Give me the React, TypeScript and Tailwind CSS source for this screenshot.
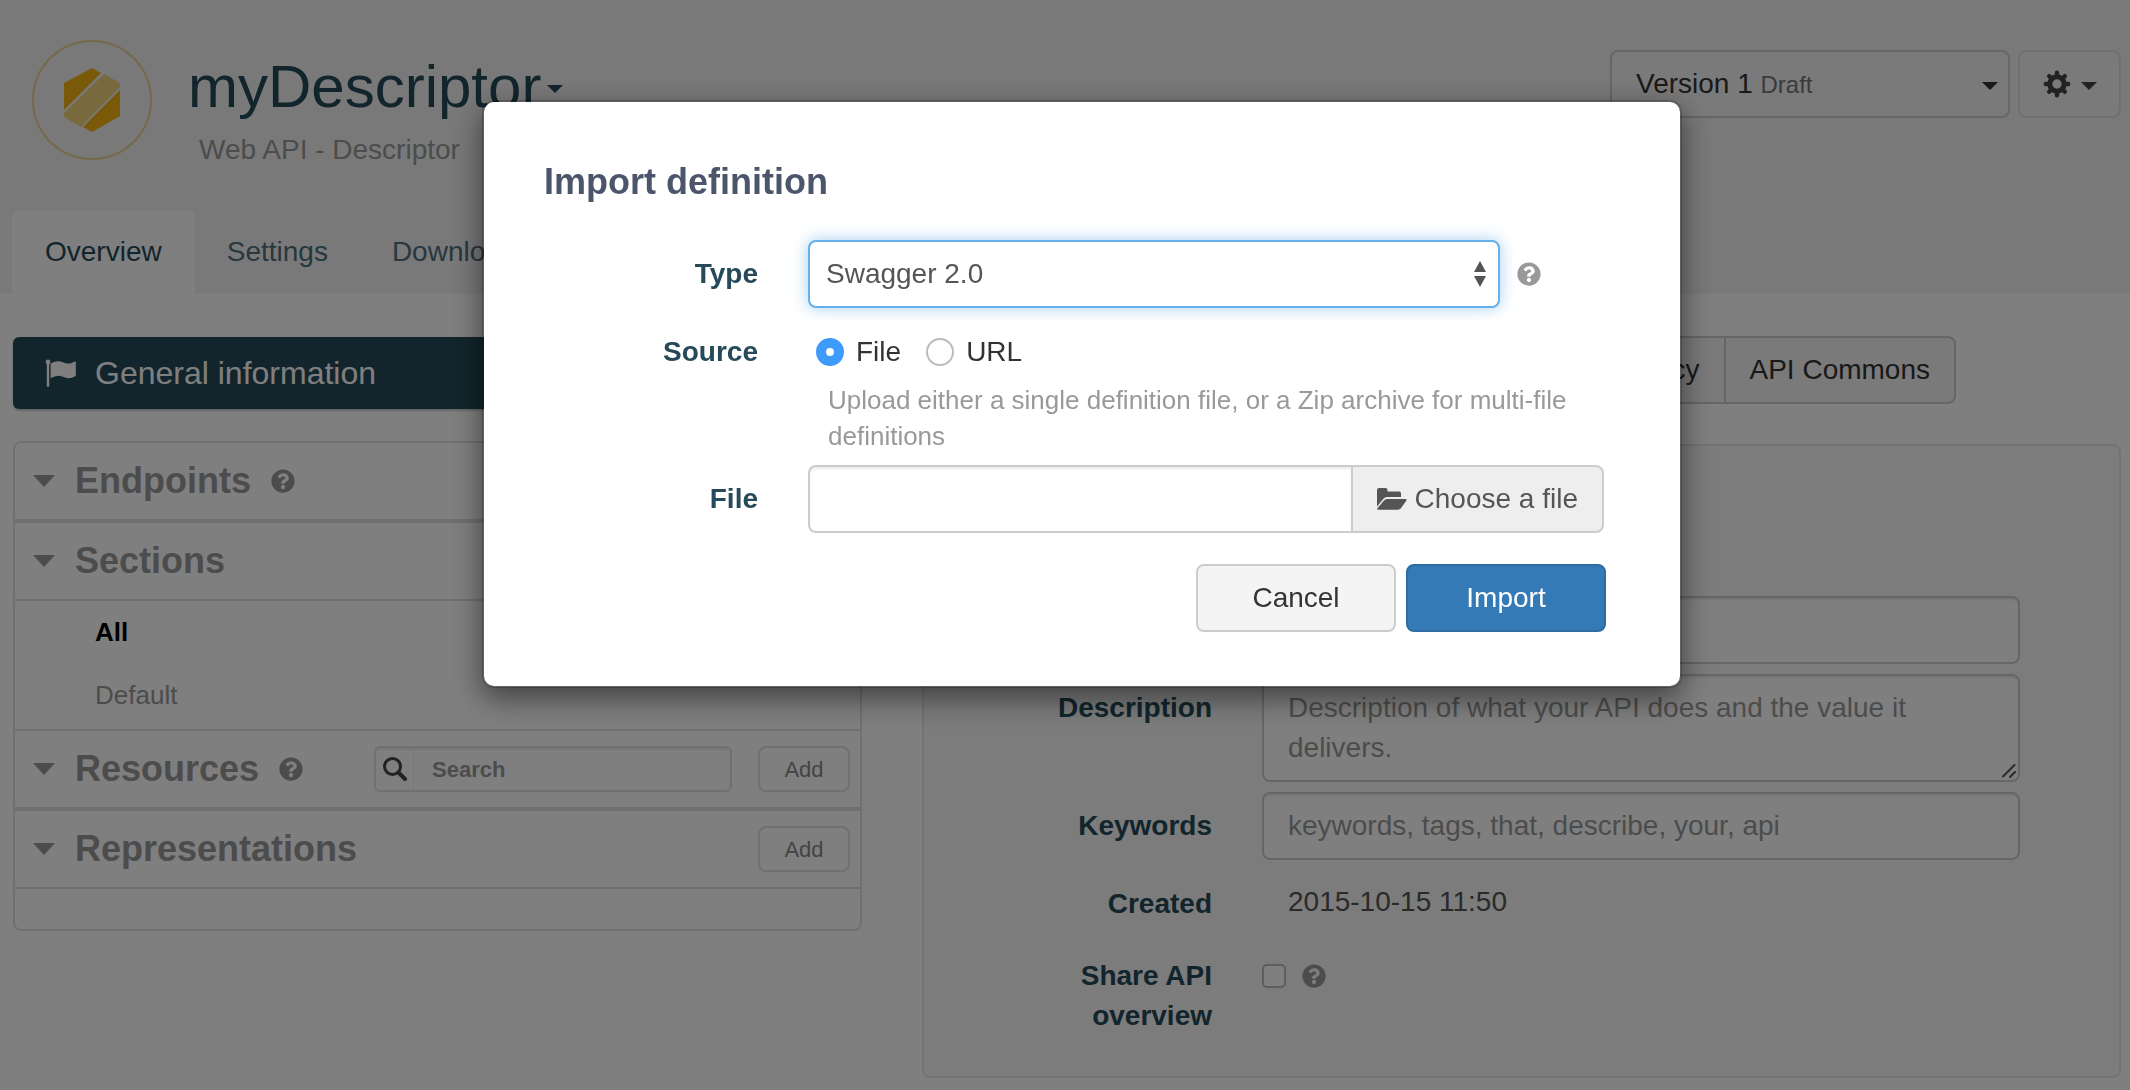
import React from 'react';
import { FaQuestionCircle } from 'react-icons/fa';

const control =
  'block w-full rounded-lg border-2 border-[#cccccc] bg-white px-6 py-3 text-[28px] leading-10 text-[#555555] placeholder-[#999999] shadow-[inset_0_2px_2px_rgba(0,0,0,0.075)]';
const fieldLabel = 'pt-[14px] text-right text-[28px] leading-10 font-bold text-[#264a59]';

function Caret({ className = '' }: { className?: string }) {
  return (
    <svg viewBox="0 0 16 8" className={`h-2 w-4 shrink-0 ${className}`} fill="currentColor" aria-hidden="true">
      <path d="M0 0h16L8 8z" />
    </svg>
  );
}

function Help({ label }: { label: string }) {
  return (
    <button type="button" aria-label={label} className="shrink-0 text-[#999999]">
      <FaQuestionCircle className="size-6" />
    </button>
  );
}

function Logo() {
  return (
    <svg viewBox="0 0 120 120" className="size-[120px] shrink-0" aria-hidden="true">
      <circle cx="60" cy="60" r="59" fill="none" stroke="#ecd394" strokeWidth="2" />
      <path d="M60 28 69 33 32 70V43z" fill="#f4b412" />
      <path d="M72 34 88 43V47L49 87 32 77V73z" fill="#f2d47c" />
      <path d="M88 50V76L60 92 51 87z" fill="#f4b412" />
    </svg>
  );
}

function Gear() {
  return (
    <svg viewBox="0 0 28 28" className="size-7" fill="none" stroke="currentColor" aria-hidden="true">
      <circle cx="14" cy="14" r="7.2" strokeWidth="5" />
      <g strokeWidth="4.4" strokeLinecap="round">
        <path d="M14 2.800V6M14 22v3.200M2.800 14H6M22 14h3.200" />
        <path d="M6.200 6.200 8.400 8.400M19.600 19.600l2.200 2.200M21.800 6.200 19.600 8.400M8.400 19.600l-2.200 2.200" />
      </g>
    </svg>
  );
}

function Flag() {
  return (
    <svg viewBox="0 0 32 28" className="h-7 w-8" fill="currentColor" aria-hidden="true">
      <circle cx="3" cy="3" r="2.400" />
      <path d="M1.800 4h2.400v23a.8.8 0 0 1-.8.8h-.8a.8.8 0 0 1-.8-.8z" />
      <path d="M5.600 4.600C9 2.800 11.500 2 14 2.200c3.600.3 5.400 2.400 9 2.400 2.600 0 4.800-1 7-2.100.4-.2.8 0 .8.500v13.200c0 .5-.3.800-.7 1-2 1.100-4.200 2-6.800 2-3.600 0-5.600-2.500-9.300-2.500-3 0-5.600 1.100-8.400 2.600z" />
    </svg>
  );
}

function FolderOpen() {
  return (
    <svg viewBox="0 0 30 22" className="h-[22px] w-[30px]" fill="currentColor" aria-hidden="true">
      <path d="M2 0h6.500a2 2 0 0 1 2 2v1.500H22a2 2 0 0 1 2 2V9H10a4.500 4.500 0 0 0-3.300 1.500L0 18.500V2a2 2 0 0 1 2-2z" />
      <path d="M10 11h18.500c1 0 1.500.8.900 1.600L24 20.200a4 4 0 0 1-3 1.500H1.500c-1 0-1.500-.8-.9-1.600L7 12.500a4 4 0 0 1 3-1.500z" />
    </svg>
  );
}

function Header() {
  return (
    <header className="bg-[#f3f3f3] pt-10">
      <div className="flex h-[170px] items-start justify-between pr-[9px] pl-8">
        <div className="flex gap-9">
          <Logo />
          <div className="pt-[17px]">
            <h1 className="text-[60px] leading-[60px] text-[#264a59]">
              <button type="button" className="flex items-center gap-1.5">
                myDescriptor
                <Caret className="mt-1" />
              </button>
            </h1>
            <p className="mt-[13px] pl-[11px] text-[28px] leading-10 text-[#999999]">Web API - Descriptor</p>
          </div>
        </div>
        <div className="flex gap-2 pt-2.5 text-[#333333]">
          <button
            type="button"
            className="flex h-[68px] w-[400px] items-center justify-between rounded-lg border-2 border-[#cccccc] bg-[#f4f4f4] pr-2.5 pl-6 text-[28px]"
          >
            <span>
              Version 1 <span className="text-2xl text-[#777777]">Draft</span>
            </span>
            <Caret className="mt-1" />
          </button>
          <button
            type="button"
            aria-label="Version settings"
            className="flex h-[68px] w-[103px] items-center justify-center gap-2.5 rounded-lg border-2 border-[#e0e0e0] bg-[#f4f4f4] text-[#444444]"
          >
            <Gear />
            <Caret className="mt-1" />
          </button>
        </div>
      </div>
      <nav className="flex pl-3 text-[28px] leading-10 text-[#4f707c]">
        <a href="#overview" className="rounded-t-lg bg-white px-[33px] py-[22px] text-[#264a59]">
          Overview
        </a>
        <a href="#settings" className="px-8 py-[22px]">
          Settings
        </a>
        <a href="#downloads" className="px-8 py-[22px]">
          Downloads
        </a>
      </nav>
    </header>
  );
}

function TreeHeader({ title, help, children }: { title: string; help?: boolean; children?: React.ReactNode }) {
  return (
    <div className="flex h-[76px] items-center pr-2.5 pl-[18px]">
      <svg viewBox="0 0 22 12" className="mr-5 h-3 w-[22px]" fill="#999999" aria-hidden="true">
        <path d="M0 0h22L11 12z" />
      </svg>
      <h2 className="mr-5 text-4xl font-bold text-[#999999]">{title}</h2>
      {help && <Help label={`About ${title}`} />}
      <div className="ml-auto flex items-center gap-[26px]">{children}</div>
    </div>
  );
}

function AddButton({ what }: { what: string }) {
  return (
    <button
      type="button"
      aria-label={`Add ${what}`}
      className="h-[46px] w-[92px] rounded-lg border-2 border-[#e0e0e0] bg-white text-[22px] text-[#888888]"
    >
      Add
    </button>
  );
}

function Sidebar() {
  return (
    <aside className="pt-[43px] pb-8">
      <button
        type="button"
        className="mb-8 flex h-[72px] w-full items-center gap-[18px] rounded-md bg-[#264a59] pl-8 text-[32px] text-white shadow-[0_2px_2px_rgba(0,0,0,0.2)]"
      >
        <Flag />
        General information
      </button>
      <div className="rounded-lg border-2 border-[#e0e0e0]">
        <div className="border-b-4 border-[#e0e0e0]">
          <TreeHeader title="Endpoints" help />
        </div>
        <div className="border-b-2 border-[#e0e0e0]">
          <TreeHeader title="Sections" />
        </div>
        <ul className="border-b-2 border-[#e0e0e0] pb-0.5 text-[26px] leading-[63px]">
          <li>
            <a href="#all" className="block pl-20 font-bold text-black">
              All
            </a>
          </li>
          <li>
            <a href="#default" className="block pl-20 text-[#999999]">
              Default
            </a>
          </li>
        </ul>
        <div className="border-b-4 border-[#e0e0e0]">
          <TreeHeader title="Resources" help>
            <label className="flex h-[46px] w-[358px] items-center rounded-md border-2 border-[#e0e0e0] shadow-[inset_0_2px_2px_rgba(0,0,0,0.075)]">
              <span className="flex h-full w-[38px] items-center justify-center border-r border-[#f0f0f0] text-[#444444]">
                <svg viewBox="0 0 24 24" className="size-6" fill="none" stroke="currentColor" aria-hidden="true">
                  <circle cx="9.500" cy="9.500" r="8" strokeWidth="3" />
                  <path d="m16 16 6 6" strokeWidth="4" strokeLinecap="round" />
                </svg>
              </span>
              <input
                type="search"
                aria-label="Search resources"
                placeholder="Search"
                className="min-w-0 flex-1 px-[18px] text-[22px] font-bold placeholder-[#999999]"
              />
            </label>
            <AddButton what="resource" />
          </TreeHeader>
        </div>
        <div className="border-b-2 border-[#e0e0e0]">
          <TreeHeader title="Representations">
            <AddButton what="representation" />
          </TreeHeader>
        </div>
        <div className="h-10" />
      </div>
    </aside>
  );
}

function Details() {
  return (
    <main className="pt-[42px]">
      <div className="mb-10 flex justify-end pr-[165px] text-[28px] text-[#333333]">
        <button type="button" className="h-[68px] rounded-l-lg border-2 border-[#cccccc] bg-[#f4f4f4] px-6">
          Privacy
        </button>
        <button type="button" className="-ml-0.5 h-[68px] rounded-r-lg border-2 border-[#cccccc] bg-[#f4f4f4] px-6">
          API Commons
        </button>
      </div>
      <form className="grid grid-cols-[188fr_758fr] gap-x-[50px] gap-y-2.5 rounded-lg border-2 border-[#e6e6e6] bg-[#f8f8f8] pt-[150px] pr-[99px] pb-10 pl-[100px]">
        <label htmlFor="name" className={fieldLabel}>
          Name
        </label>
        <input id="name" type="text" className={control} />
        <label htmlFor="description" className={fieldLabel}>
          Description
        </label>
        <div className="relative">
          <textarea
            id="description"
            rows={2}
            placeholder="Description of what your API does and the value it delivers."
            className={`${control} h-[108px] resize-none overflow-hidden pr-20`}
          />
          <svg
            viewBox="0 0 14 14"
            className="pointer-events-none absolute right-1 bottom-1 size-3.5"
            stroke="#555555"
            strokeWidth="2"
            strokeLinecap="round"
            aria-hidden="true"
          >
            <path d="M1 12.500 12.500 1M8 13l5-5" />
          </svg>
        </div>
        <label htmlFor="keywords" className={fieldLabel}>
          Keywords
        </label>
        <input id="keywords" type="text" placeholder="keywords, tags, that, describe, your, api" className={control} />
        <div className={fieldLabel}>Created</div>
        <p className="min-h-[62px] pt-3 pl-[26px] text-[28px] leading-10 text-[#555555]">2015-10-15 11:50</p>
        <label htmlFor="share" className={fieldLabel}>
          Share API overview
        </label>
        <div className="flex h-[68px] items-center gap-4">
          <input
            id="share"
            type="checkbox"
            className="size-6 appearance-none rounded-[5px] border-2 border-[#bcbcbc] bg-white"
          />
          <Help label="About sharing" />
        </div>
      </form>
    </main>
  );
}

function Radio({ id, label, checked }: { id: string; label: string; checked?: boolean }) {
  return (
    <span className="flex items-center gap-3">
      <input
        id={id}
        type="radio"
        name="source"
        defaultChecked={checked}
        className="size-7 appearance-none rounded-full border-2 border-[#bcbcbc] bg-white checked:border-[10px] checked:border-[#3f9bfb]"
      />
      <label htmlFor={id} className="text-[28px] leading-10 text-[#333333]">
        {label}
      </label>
    </span>
  );
}

function ImportDialog() {
  return (
    <div className="fixed inset-0 flex items-start justify-center bg-black/50 pt-[100px] pl-[34px]">
      <section
        role="dialog"
        aria-modal="true"
        aria-labelledby="import-title"
        className="w-full max-w-[1200px] rounded-xl border-2 border-black/20 bg-white bg-clip-padding px-[60px] pt-[58px] pb-[54px] shadow-[0_10px_30px_rgba(0,0,0,0.5)]"
      >
        <h2 id="import-title" className="text-4xl leading-[44px] font-bold text-[#4c566b]">
          Import definition
        </h2>
        <form className="mt-9 pr-3.5">
          <div className="grid grid-cols-[214px_1fr] gap-x-[50px] pr-0.5">
            <label htmlFor="type" className={fieldLabel}>
              Type
            </label>
            <div className="flex items-center gap-[17px] pr-[63px]">
              <div className="relative flex-1">
                <select
                  id="type"
                  className="h-[68px] w-full appearance-none rounded-lg border-2 border-[#66afe9] bg-white px-4 text-[28px] text-[#555555] shadow-[0_0_16px_rgba(102,175,233,0.6)]"
                >
                  <option>Swagger 2.0</option>
                </select>
                <svg
                  viewBox="0 0 14 26"
                  className="pointer-events-none absolute top-[21px] right-[13px] h-[26px] w-3.5"
                  fill="#555555"
                  aria-hidden="true"
                >
                  <path d="M7 0l6 11H1zM7 26 1 15h12z" />
                </svg>
              </div>
              <Help label="About import types" />
            </div>
            <div className="pt-6 text-right text-[28px] leading-10 font-bold text-[#264a59]" id="source-label">
              Source
            </div>
            <div role="radiogroup" aria-labelledby="source-label" className="flex gap-[25px] pt-6 pl-2">
              <Radio id="source-file" label="File" checked />
              <Radio id="source-url" label="URL" />
            </div>
            <p className="col-start-2 pt-2.5 pb-[11px] pl-5 text-[26px] leading-9 text-[#999999]">
              Upload either a single definition file, or a Zip archive for multi-file definitions
            </p>
            <label htmlFor="file" className={fieldLabel}>
              File
            </label>
            <div className="flex">
              <input
                id="file"
                type="text"
                className="h-[68px] min-w-0 flex-1 rounded-l-lg border-2 border-r-0 border-[#cccccc] px-6 text-[28px] shadow-[inset_0_2px_2px_rgba(0,0,0,0.075)]"
              />
              <button
                type="button"
                className="flex h-[68px] items-center gap-2 rounded-r-lg border-2 border-[#cccccc] bg-[#eeeeee] px-6 text-[28px] text-[#555555]"
              >
                <FolderOpen />
                Choose a file
              </button>
            </div>
          </div>
          <div className="mt-[31px] flex justify-end gap-2.5 text-[28px]">
            <button type="button" className="h-[68px] w-[200px] rounded-lg border-2 border-[#cccccc] bg-[#f4f4f4] text-[#333333]">
              Cancel
            </button>
            <button type="submit" className="h-[68px] w-[200px] rounded-lg border-2 border-[#2e6da4] bg-[#337ab7] text-white">
              Import
            </button>
          </div>
        </form>
      </section>
    </div>
  );
}

export default function App() {
  return (
    <div className="min-h-screen bg-white font-['Liberation_Sans',Arial,sans-serif]">
      <Header />
      <div className="grid grid-cols-[849fr_1199fr] items-start gap-[60px] pr-[9px] pl-[13px]">
        <Sidebar />
        <Details />
      </div>
      <ImportDialog />
    </div>
  );
}
